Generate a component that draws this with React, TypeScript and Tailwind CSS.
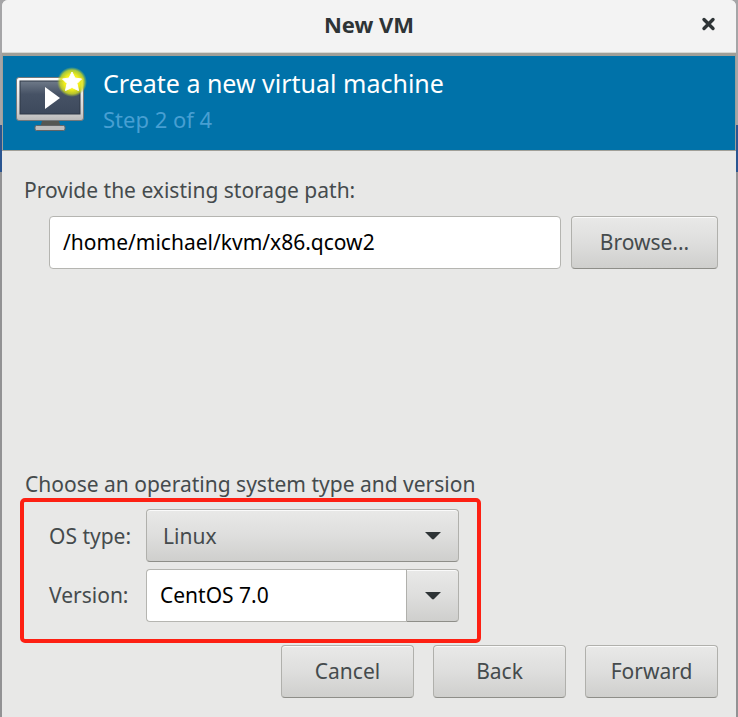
import React from "react";

const buttonLook =
  "h-[53px] rounded-[4px] border border-[#b0b0ac] border-b-[#8e8e89] bg-linear-to-b from-[#e9e9e8] via-[#dededd] to-[#cfcfcd] shadow-[inset_0_1px_0_#fafafa] text-[#454b4d]";

function DownArrow() {
  return (
    <svg width="16" height="8" viewBox="0 0 16 8" aria-hidden="true">
      <path d="M0 0H16L9 7Q8 7.8 7 7Z" fill="#2e3436" />
    </svg>
  );
}

function MachineIcon() {
  return (
    <svg width="72" height="66" viewBox="0 0 72 66" aria-hidden="true" className="shrink-0">
      <defs>
        <linearGradient id="frame" x1="0" y1="0" x2="0" y2="1">
          <stop offset="0" stopColor="#ffffff" />
          <stop offset="0.8" stopColor="#d0d0d0" />
          <stop offset="1" stopColor="#b8b8b8" />
        </linearGradient>
        <linearGradient id="screen" x1="0" y1="0" x2="0" y2="1">
          <stop offset="0" stopColor="#6f7a89" />
          <stop offset="0.4" stopColor="#465265" />
          <stop offset="1" stopColor="#3d495c" />
        </linearGradient>
        <radialGradient id="glow">
          <stop offset="0.5" stopColor="#f4f01a" />
          <stop offset="0.8" stopColor="#d0dc20" stopOpacity="0.8" />
          <stop offset="1" stopColor="#a0c840" stopOpacity="0" />
        </radialGradient>
      </defs>
      <path d="M27 54H44L46 61H25Z" fill="#555753" />
      <rect x="20" y="58.5" width="30" height="5" rx="1.5" fill="#bdbdbd" stroke="#626466" />
      <rect x="1.5" y="10.500" width="67" height="43" rx="2.5" fill="url(#frame)" stroke="#74787a" />
      <rect x="5" y="14" width="60" height="33" fill="url(#screen)" stroke="#2f3947" />
      <path d="M30 20V42L45 31Z" fill="#fff" />
      <circle cx="57" cy="15" r="15" fill="url(#glow)" />
      <path d="M57 5L60 11L66.500 12L62 16.500L63.500 23.500L57 20.500L50.500 23.500L52 16.500L47.500 12L54 11Z" fill="#fff" stroke="#fff" strokeLinejoin="round" />
    </svg>
  );
}

export default function App() {
  return (
    <div className="min-h-screen bg-[linear-gradient(to_bottom,#a5a5a7_0,#a5a5a7_125px,#2a5591_125px,#2a5591_172px,#929294_172px)] px-[2px] font-['Noto_Sans',sans-serif] text-[21px] leading-7 text-[#454b4d]">
      <main className="flex min-h-screen flex-col rounded-t-[6px] bg-[#e8e8e7]">
        <header className="grid h-[53px] grid-cols-[1fr_auto_1fr] items-center rounded-t-[6px] border-b border-[#d8d8d3] bg-[#f3f3f3] px-5 pb-1">
          <h1 className="col-start-2 text-[22px] font-bold text-[#2e3436]">New VM</h1>
          <button type="button" aria-label="Close" className="justify-self-end">
            <svg width="15" height="14" viewBox="0 0 15 14" aria-hidden="true">
              <path d="M3 2.500L12 11.500M12 2.500L3 11.500" stroke="#2e3436" strokeWidth="3.400" strokeLinecap="round" />
            </svg>
          </button>
        </header>

        <section className="flex h-[98px] items-start gap-[16px] border border-t-[3px] border-[#a09f98] bg-[#0072a9] pt-[11px] pl-[12px]">
          <MachineIcon />
          <div className="-mt-[2px]">
            <h2 className="text-[25px] leading-9 text-white">Create a new virtual machine</h2>
            <p className="text-[22px] leading-9 text-[#479fd2]">Step 2 of 4</p>
          </div>
        </section>

        <form className="flex flex-1 flex-col pr-[18px] pb-[19px] pl-[18px]" onSubmit={(e) => e.preventDefault()}>
          <label htmlFor="path" className="mt-[25px] pl-1">
            Provide the existing storage path:
          </label>
          <div className="mt-3 flex gap-[10px] pl-[29px]">
            <input
              id="path"
              defaultValue="/home/michael/kvm/x86.qcow2"
              className="h-[53px] min-w-0 flex-1 rounded-[4px] border border-[#b5b5b1] bg-white px-[13px] pb-[2px] text-black"
            />
            <button type="button" className={`${buttonLook} w-[147px] pb-[2px]`}>
              Browse...
            </button>
          </div>

          <h3 className="mt-auto pl-[5px]">Choose an operating system type and version</h3>
          <div className="flex w-[461px] max-w-full flex-col gap-[7px] rounded-[5px] border-4 border-[#fd2013] pt-[7px] pr-[18px] pb-[17px] pl-[25px]">
            <div className="flex items-center">
              <label htmlFor="os" className="w-[97px] shrink-0">
                OS type:
              </label>
              <div className="grid flex-1 items-center">
                <select id="os" defaultValue="Linux" className={`${buttonLook} col-start-1 row-start-1 w-full appearance-none px-4`}>
                  <option>Linux</option>
                </select>
                <span className="pointer-events-none col-start-1 row-start-1 justify-self-end pr-[18px]">
                  <DownArrow />
                </span>
              </div>
            </div>
            <div className="flex items-center">
              <label htmlFor="version" className="w-[97px] shrink-0 pb-[2px]">
                Version:
              </label>
              <input
                id="version"
                defaultValue="CentOS 7.0"
                className="h-[53px] min-w-0 flex-1 rounded-l-[4px] border border-r-0 border-[#b5b5b1] bg-white px-[13px] pb-[2px] text-black"
              />
              <button type="button" aria-label="Show versions" className={`${buttonLook} flex w-[53px] items-center justify-center rounded-l-none`}>
                <DownArrow />
              </button>
            </div>
          </div>

          <footer className="mt-[2px] flex justify-end gap-[19px]">
            <button type="button" className={`${buttonLook} w-[133px] pb-[2px]`}>Cancel</button>
            <button type="button" className={`${buttonLook} w-[133px] pb-[2px]`}>Back</button>
            <button type="submit" className={`${buttonLook} w-[133px] pb-[2px]`}>Forward</button>
          </footer>
        </form>
      </main>
    </div>
  );
}
